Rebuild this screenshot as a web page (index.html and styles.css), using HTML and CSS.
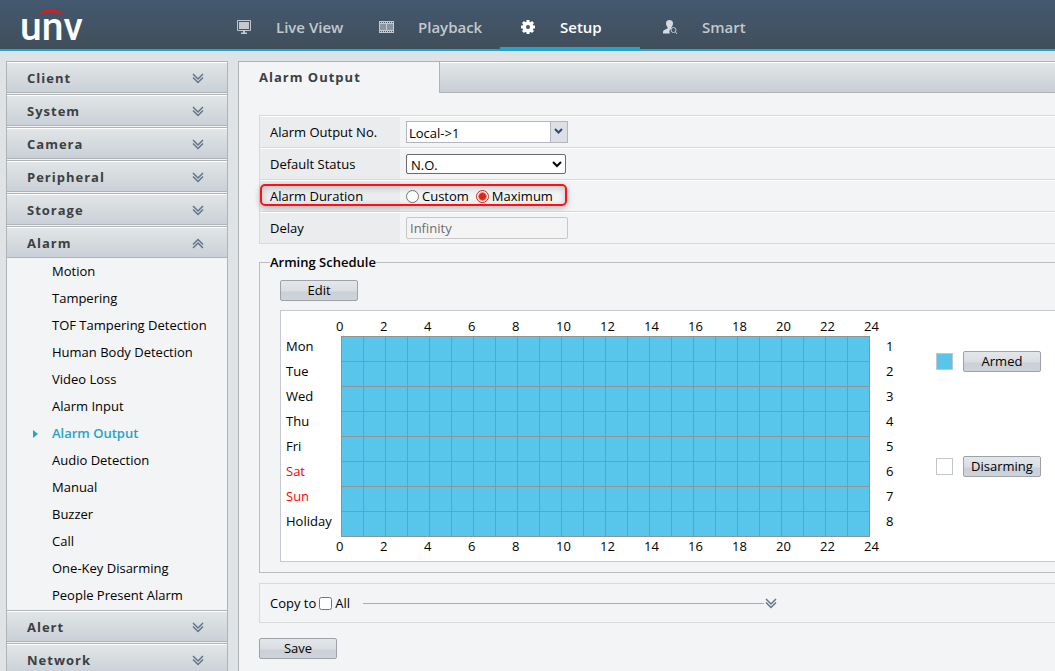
FILE: index.html
```html
<!DOCTYPE html>
<html lang="en">
<head>
    <meta charset="UTF-8">
    <meta name="viewport" content="width=device-width, initial-scale=1.0">
    <title>Alarm Output</title>
    <link rel="stylesheet" href="styles.css">
</head>
<body>

    <!-- Shared icons -->
    <svg class="sprite" width="0" height="0" aria-hidden="true">
        <symbol id="chevrons" viewBox="0 0 12 11">
            <path d="M1 1l5 5 5-5M1 4.500l5 5 5-5" fill="none" stroke="#64748a" stroke-width="1.500"/>
        </symbol>
    </svg>

    <!-- Top bar -->
    <header class="header">
        <div class="logo">
            <svg class="logo-arc" width="26" height="7" viewBox="0 0 26 7"><path d="M0 6.500C7-2 19-2 26 6.500C18 2 8 2 0 6.500z" fill="#e3191b"/></svg>
            <span>unv</span>
        </div>
        <nav class="nav">
            <a href="#" class="nav-item">
                <svg width="16" height="16" viewBox="0 0 16 16"><path d="M1.500 1.500h13v10h-13z" fill="none" stroke="#c3c9ce"/><path d="M3 3h10v7H3zM7 12h2v1.500h2V15H5v-1.500h2z" fill="#c3c9ce"/></svg>
                <span>Live View</span>
            </a>
            <a href="#" class="nav-item">
                <svg width="16" height="16" viewBox="0 0 16 16"><path d="M1 2h15v12H1z" fill="#c3c9ce"/><path d="M2 5h6v6H2zM9 5h6v6H9z" fill="#8995a1"/><path d="M2 3.500h14M2 12.500h14" stroke="#455666" stroke-dasharray="1 1"/></svg>
                <span>Playback</span>
            </a>
            <a href="#" class="nav-item active">
                <svg width="16" height="16" viewBox="0 0 16 16"><g stroke="#fff" stroke-width="3"><path d="M8 1v14M1 8h14M3 3l10 10M13 3L3 13"/></g><circle cx="8" cy="8" r="5.500" fill="#fff"/><circle cx="8" cy="8" r="2" fill="#445669"/></svg>
                <span>Setup</span>
            </a>
            <a href="#" class="nav-item">
                <svg width="16" height="16" viewBox="0 0 16 16"><path d="M4 4c0-4 7-4 7 0 0 2-.5 3-1.500 4v1.500C7 11 7 13 8 14.500H1V13c0-1.500 1-2 4.500-3.500V8C4.500 7 4 6 4 4z" fill="#d6dadd"/><circle cx="11.500" cy="11" r="2.500" fill="none" stroke="#c3c9ce"/><path d="M13.500 13l1.500 2" stroke="#c3c9ce"/></svg>
                <span>Smart</span>
            </a>
        </nav>
    </header>

    <div class="page">
        <!-- Side menu -->
        <aside class="sidebar">
            <button type="button" class="menu-title">Client<svg class="chev"><use href="#chevrons"/></svg></button>
            <button type="button" class="menu-title">System<svg class="chev"><use href="#chevrons"/></svg></button>
            <button type="button" class="menu-title">Camera<svg class="chev"><use href="#chevrons"/></svg></button>
            <button type="button" class="menu-title">Peripheral<svg class="chev"><use href="#chevrons"/></svg></button>
            <button type="button" class="menu-title">Storage<svg class="chev"><use href="#chevrons"/></svg></button>
            <div class="menu-open">
                <button type="button" class="menu-title">Alarm<svg class="chev up"><use href="#chevrons"/></svg></button>
                <ul class="submenu">
                    <li><a href="#">Motion</a></li>
                    <li><a href="#">Tampering</a></li>
                    <li><a href="#">TOF Tampering Detection</a></li>
                    <li><a href="#">Human Body Detection</a></li>
                    <li><a href="#">Video Loss</a></li>
                    <li><a href="#">Alarm Input</a></li>
                    <li><a href="#" class="current">Alarm Output</a></li>
                    <li><a href="#">Audio Detection</a></li>
                    <li><a href="#">Manual</a></li>
                    <li><a href="#">Buzzer</a></li>
                    <li><a href="#">Call</a></li>
                    <li><a href="#">One-Key Disarming</a></li>
                    <li><a href="#">People Present Alarm</a></li>
                </ul>
            </div>
            <button type="button" class="menu-title">Alert<svg class="chev"><use href="#chevrons"/></svg></button>
            <button type="button" class="menu-title">Network<svg class="chev"><use href="#chevrons"/></svg></button>
        </aside>

        <main class="main">
            <div class="tabs">
                <h1 class="tab">Alarm Output</h1>
                <div class="tab-rest"></div>
            </div>

            <form class="content">
                <!-- Output settings -->
                <div class="settings">
                    <div class="row">
                        <label class="name" for="outputNo">Alarm Output No.</label>
                        <div class="value"><select id="outputNo" class="combo"><option>Local-&gt;1</option></select></div>
                    </div>
                    <div class="row">
                        <label class="name" for="status">Default Status</label>
                        <div class="value"><select id="status" class="status"><option>N.O.</option><option>N.C.</option></select></div>
                    </div>
                    <div class="row">
                        <span class="name">Alarm Duration</span>
                        <div class="value">
                            <input type="radio" name="duration" id="custom"><label for="custom">Custom</label>
                            <input type="radio" name="duration" id="maximum" checked><label for="maximum">Maximum</label>
                        </div>
                        <div class="highlight"></div>
                    </div>
                    <div class="row">
                        <label class="name" for="delay">Delay</label>
                        <div class="value"><input type="text" id="delay" class="delay" value="Infinity" disabled></div>
                    </div>
                </div>

                <!-- Arming schedule -->
                <fieldset class="schedule">
                    <legend>Arming Schedule</legend>
                    <button type="button" class="btn">Edit</button>
                    <div class="board">
                        <div class="days">
                            <span>Mon</span><span>Tue</span><span>Wed</span><span>Thu</span><span>Fri</span>
                            <span class="weekend">Sat</span><span class="weekend">Sun</span><span>Holiday</span>
                        </div>
                        <div class="chart">
                            <div class="hours">
                                <span>0</span><span>2</span><span>4</span><span>6</span><span>8</span><span>10</span><span>12</span><span>14</span><span>16</span><span>18</span><span>20</span><span>22</span><span>24</span>
                            </div>
                            <div class="cells"></div>
                            <div class="hours">
                                <span>0</span><span>2</span><span>4</span><span>6</span><span>8</span><span>10</span><span>12</span><span>14</span><span>16</span><span>18</span><span>20</span><span>22</span><span>24</span>
                            </div>
                        </div>
                        <div class="days">
                            <span>1</span><span>2</span><span>3</span><span>4</span><span>5</span><span>6</span><span>7</span><span>8</span>
                        </div>
                        <div class="modes">
                            <div class="mode"><i class="swatch armed"></i><button type="button" class="btn">Armed</button></div>
                            <div class="mode"><i class="swatch"></i><button type="button" class="btn">Disarming</button></div>
                        </div>
                    </div>
                </fieldset>

                <div class="copy">
                    <span>Copy to</span>
                    <input type="checkbox" id="all"><label for="all">All</label>
                    <div class="copy-line"></div>
                    <svg class="chev"><use href="#chevrons"/></svg>
                </div>

                <button type="button" class="btn">Save</button>
            </form>
        </main>
    </div>

</body>
</html>
```

FILE: styles.css
```css
* {
    box-sizing: border-box;
}
body {
    margin: 0;
    height: 100vh;
    overflow: hidden;
    display: flex;
    flex-direction: column;
    background-color: #dfe3e6;
    font-family: "Open Sans", "Noto Sans", sans-serif;
    font-size: 13px;
    line-height: 18px;
    color: #000;
}
button, input, select {
    font: inherit;
    color: inherit;
    margin: 0;
}
a {
    color: inherit;
    text-decoration: none;
}
.sprite {
    position: absolute;
}

/* Top bar */
.header {
    display: flex;
    flex: none;
    height: 51px;
    background: linear-gradient(#43596f, #414e5b);
    border-bottom: 2px solid #27a3ca;
}
.logo {
    width: 216px;
    padding-left: 20px;
    position: relative;
    font-family: Roboto, sans-serif;
    font-size: 39px;
    font-weight: 500;
    line-height: 55px;
    color: #fff;
}
.logo-arc {
    position: absolute;
    left: 38px;
    top: 9px;
}
.nav {
    display: flex;
    gap: 2px;
}
.nav-item {
    display: flex;
    align-items: center;
    gap: 24px;
    width: 140px;
    height: 49px;
    padding: 7px 0 0 20px;
    font-size: 15px;
    font-weight: 600;
    color: #c3c9ce;
    white-space: nowrap;
    border-bottom: 2px solid transparent;
}
.nav-item.active {
    color: #fff;
    border-bottom-color: #27a3ca;
}

.page {
    display: flex;
    flex: 1;
    gap: 10px;
    padding: 10px 0 0 6px;
    min-height: 0;
}

/* Side menu */
.sidebar {
    display: flex;
    flex-direction: column;
    flex: none;
    gap: 1px;
    width: 222px;
    background-color: #f3f4f6;
    border: 1px solid #b0b3b6;
    border-width: 0 1px;
    overflow: hidden;
}
.menu-title {
    display: flex;
    flex: none;
    justify-content: space-between;
    align-items: center;
    width: 100%;
    height: 32px;
    padding: 2px 23px 0 20px;
    border: solid #b0b3b6;
    border-width: 1px 0;
    background: linear-gradient(#e2e6e8, #d6dbde 50%, #c9d0d8);
    box-shadow: inset 0 1px #fff;
    font-weight: bold;
    letter-spacing: 1px;
    color: #3c4043;
}
.chev {
    width: 12px;
    height: 11px;
    flex: none;
}
.chev.up {
    transform: rotate(180deg);
}
.submenu {
    list-style: none;
    margin: 0;
    padding: 0;
}
.submenu a {
    display: block;
    padding-left: 45px;
    line-height: 27px;
}
.submenu .current {
    display: flex;
    align-items: center;
    padding-left: 26px;
    font-weight: 600;
    color: #27a3ca;
}
.current::before {
    content: "";
    margin-right: 14px;
    border: solid transparent;
    border-width: 4px 0 4px 5px;
    border-left-color: #27a3ca;
}

/* Main panel */
.main {
    flex: 1;
    min-width: 0;
    background-color: #f3f4f6;
    border-left: 1px solid #b0b3b6;
}
.tabs {
    display: flex;
    height: 32px;
}
.tab {
    width: 200px;
    margin: 0;
    padding-left: 20px;
    border-top: 1px solid #b0b3b6;
    font-size: 13px;
    line-height: 30px;
    letter-spacing: 1px;
    color: #3c4043;
}
.tab-rest {
    flex: 1;
    border: solid #b0b3b6;
    border-width: 1px 0 1px 1px;
    background: linear-gradient(#e2e6e8, #d6dbde 50%, #cdd2da 80%, #c9d0d4);
    box-shadow: inset 0 1px #fff;
}
.content {
    padding: 22px 0 0 20px;
}

.settings {
    border: 1px solid #d7d9dc;
    border-right: 0;
}
.row {
    display: flex;
    position: relative;
    height: 32px;
    border-bottom: 1px solid #d7d9dc;
    box-shadow: inset 0 1px #fff;
}
.row:last-child {
    height: 31px;
    border-bottom: 0;
}
.name {
    width: 140px;
    margin-top: 1px;
    padding-left: 10px;
    line-height: 31px;
    background-color: #ebecee;
}
.value {
    display: flex;
    align-items: center;
    padding: 1px 0 0 6px;
}
.combo {
    appearance: none;
    width: 162px;
    height: 22px;
    padding: 2px 20px 0 2px;
    border: 1px solid #b3b6bd;
    border-radius: 0;
    background: #fff url("data:image/svg+xml,%3Csvg xmlns='http://www.w3.org/2000/svg' width='17' height='20'%3E%3Cpath d='M0 0h17v20H0z' fill='%23dcdfe3'/%3E%3Cpath d='M.5 0v20' stroke='%23b3b6bd'/%3E%3Cpath d='M5 7l3.500 3.500L12 7' fill='none' stroke='%232b4a86' stroke-width='2'/%3E%3C/svg%3E") no-repeat right center;
}
.status {
    width: 160px;
    height: 20px;
    padding: 0;
    border: 1px solid #6b6b6b;
    border-radius: 2px;
    background-color: #fff;
}
.delay {
    width: 162px;
    height: 22px;
    padding: 0 3px;
    border: 1px solid #c6c8ca;
    border-radius: 2px;
    background-color: #f4f4f4;
    color: #6d6d6d;
}
.value input[type="radio"] {
    appearance: none;
    width: 13px;
    height: 13px;
    margin-right: 3px;
    border: 1px solid #767676;
    border-radius: 50%;
    background-color: #fff;
}
.value input[type="radio"]:checked {
    border-color: #d9261c;
    background: radial-gradient(circle, #d9261c 3px, #fff 5px);
}
.value label {
    margin-right: 7px;
}
.highlight {
    position: absolute;
    left: 0;
    top: 4px;
    width: 307px;
    height: 22px;
    border: 2px solid #ff0f14;
    border-radius: 5px;
    box-shadow: 0 2px 6px rgba(0, 0, 0, 0.25), inset 0 2px 6px rgba(0, 0, 0, 0.2);
    pointer-events: none;
}

.btn {
    display: block;
    width: 78px;
    height: 21px;
    padding: 0;
    border: 1px solid #9da2a8;
    border-radius: 2px;
    background: linear-gradient(#e4e7ea, #dadee2 50%, #cbd0d8 60%, #ced4d9);
    line-height: 17px;
}

/* Arming schedule */
.schedule {
    min-width: 0;
    margin: 9px 0 10px;
    padding: 9px 0 10px 20px;
    border: 1px solid #b9bcc0;
    border-right: 0;
}
.schedule legend {
    margin-left: -10px;
    padding: 0;
    font-weight: 600;
}
.board {
    display: flex;
    margin-top: 9px;
    padding: 6px 0 5px 5px;
    border: 1px solid #c6c9cf;
    border-right: 0;
    background-color: #fff;
}
.days {
    display: flex;
    flex-direction: column;
    flex: none;
    width: 50px;
    padding-top: 17px;
    line-height: 25px;
}
.weekend {
    color: #f00;
}
.chart {
    flex: none;
    width: 550px;
}
.hours {
    display: flex;
    line-height: 19px;
}
.hours span {
    flex: none;
    width: 44px;
}
/* 24 hours by 8 days, one grid line every 22px and 25px */
.cells {
    width: 529px;
    height: 201px;
    margin-left: 5px;
    background:
        repeating-linear-gradient(90deg, #929292 0 1px, transparent 1px 22px),
        repeating-linear-gradient(#929292 0 1px, #58c6ea 1px 25px);
}
.modes {
    display: flex;
    flex-direction: column;
    gap: 84px;
    padding-top: 34px;
}
.mode {
    display: flex;
    align-items: center;
    gap: 10px;
}
.swatch {
    width: 17px;
    height: 17px;
    border: 1px solid #c2c6cd;
}
.swatch.armed {
    background-color: #58c6ea;
}

.copy {
    display: flex;
    align-items: center;
    height: 40px;
    margin-bottom: 15px;
    padding-left: 10px;
    border: 1px solid #d7d9dc;
    border-right: 0;
}
.copy input {
    width: 13px;
    height: 13px;
    margin: 0 3px;
}
.copy-line {
    width: 401px;
    height: 1px;
    margin: 0 1px 0 13px;
    background-color: #b0aca4;
}
```
